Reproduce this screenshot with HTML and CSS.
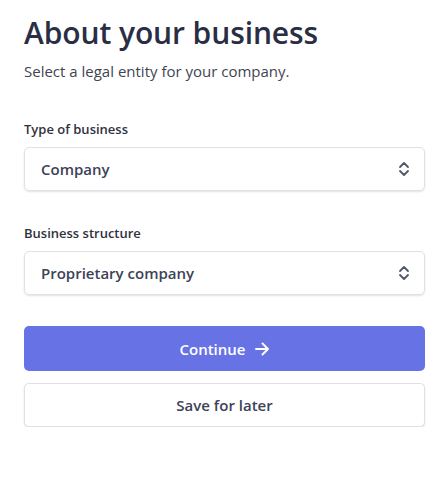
FILE: index.html
```html
<!DOCTYPE html>
<html>
<head>
<meta charset="utf-8">
<link rel="stylesheet" href="styles.css">
</head>
<body>
<main class="page">
  <h1 class="title">About your business</h1>
  <p class="subtitle">Select a legal entity for your company.</p>

  <div class="field">
    <label class="label">Type of business</label>
    <div class="select">
      <span class="select-value">Company</span>
      <svg class="chevrons" width="12" height="16" viewBox="0 0 12 16"><path d="M2 6 L6 2 L10 6 M2 10 L6 14 L10 10" fill="none" stroke="#4f566b" stroke-width="1.8" stroke-linecap="round" stroke-linejoin="round"/></svg>
    </div>
  </div>

  <div class="field">
    <label class="label">Business structure</label>
    <div class="select">
      <span class="select-value">Proprietary company</span>
      <svg class="chevrons" width="12" height="16" viewBox="0 0 12 16"><path d="M2 6 L6 2 L10 6 M2 10 L6 14 L10 10" fill="none" stroke="#4f566b" stroke-width="1.8" stroke-linecap="round" stroke-linejoin="round"/></svg>
    </div>
  </div>

  <div class="actions">
    <button class="btn btn-primary">Continue
      <svg class="arrow" width="16" height="16" viewBox="0 0 16 16"><path d="M2 8 H14 M8.5 2.5 L14 8 L8.5 13.5" fill="none" stroke="#fff" stroke-width="2" stroke-linecap="round" stroke-linejoin="round"/></svg>
    </button>
    <button class="btn btn-secondary">Save for later</button>
  </div>
</main>
</body>
</html>
```

FILE: styles.css
```css
* { box-sizing: border-box; }
html, body { margin: 0; background: #fff; }
body {
  font-family: "Open Sans", "Noto Sans", "DejaVu Sans", sans-serif;
  color: #30313d;
}
.page {
  padding: 13px 20px 0 24px;
  display: flex;
  flex-direction: column;
}
.title {
  margin: 0;
  font-size: 30px;
  line-height: 40px;
  font-weight: 600;
  color: #2a2e45;
  letter-spacing: -0.1px;
}
.subtitle {
  margin: 8px 0 0;
  font-size: 15px;
  line-height: 20px;
  color: #414552;
}
.field {
  margin-top: 39px;
  display: flex;
  flex-direction: column;
}
.field + .field { margin-top: 33px; }
.label {
  font-size: 13px;
  line-height: 18px;
  font-weight: 600;
  color: #30313d;
  margin-bottom: 9px;
}
.select {
  height: 44px;
  border: 1px solid #e0e0e6;
  border-radius: 5px;
  box-shadow: 0 1px 2px rgba(0,0,0,0.12);
  display: flex;
  align-items: center;
  justify-content: space-between;
  padding: 0 14px 0 16px;
}
.select-value {
  font-size: 15px;
  font-weight: 600;
  color: #3c4257;
}
.chevrons { display: block; }
.actions {
  margin-top: 31px;
  display: flex;
  flex-direction: column;
  gap: 12px;
}
.btn {
  font-family: inherit;
  height: 45px;
  border-radius: 5px;
  font-size: 15px;
  font-weight: 600;
  display: flex;
  align-items: center;
  justify-content: center;
  gap: 8px;
  cursor: pointer;
}
.btn-primary {
  background: #6772e5;
  color: #fff;
  border: none;
}
.btn-secondary {
  height: 44px;
  background: #fff;
  color: #3c4257;
  border: 1px solid #e0e0e6;
  box-shadow: 0 1px 2px rgba(0,0,0,0.12);
}
```
